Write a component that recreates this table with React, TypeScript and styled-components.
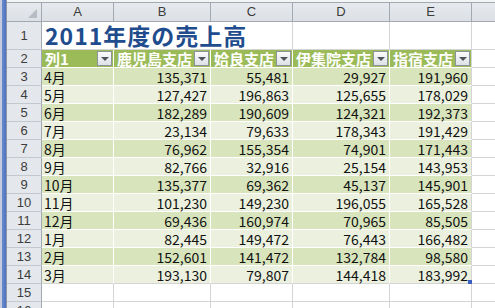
import React from 'react'
import styled, {createGlobalStyle} from 'styled-components'

const GlobalStyle = createGlobalStyle`
    html, body {
        margin: 0;
        padding: 0;
        background: #ffffff;
        overflow: hidden;
    }
    * {
        box-sizing: border-box;
    }
`

const CJK = `'Noto Sans CJK JP', 'Noto Sans', sans-serif`
const GRID = '#d4d4d4'
const HEAD_LINE = '#a3a9b1'

const Window = styled.div`
    display: flex;
    width: 495px;
    height: 308px;
`

const FrameStripe = styled.div`
    width: 7px;
    flex: 0 0 7px;
    background: linear-gradient(to right, #c3cbe0 0, #c3cbe0 2px, #6c8cd0 2px, #4f72bd 6px, #8a96aa 6px);
`

const Sheet = styled.div`
    flex: 1;
    display: flex;
    flex-direction: column;
    overflow: hidden;
`

const TopStrip = styled.div`
    height: 3px;
    flex: 0 0 3px;
    background: #f3f4f6;
    border-bottom: 1px solid ${HEAD_LINE};
`

const Grid = styled.div`
    display: grid;
    grid-template-columns: 35px 72px 97px 82px 97px 82px 72px;
    grid-template-rows: 19px 28px 18px repeat(14, 18px);
`

const ColHead = styled.div`
    display: flex;
    align-items: center;
    justify-content: center;
    background: linear-gradient(#e6e9ed, #dce0e5);
    border-right: 1px solid ${HEAD_LINE};
    border-bottom: 1px solid ${HEAD_LINE};
    font-family: 'Liberation Sans', Arial, sans-serif;
    font-size: 13px;
    line-height: 16px;
    color: #3c3c3c;
`

const Corner = styled(ColHead)`
    align-items: flex-end;
    justify-content: flex-end;
    padding: 0 4px 3px 0;
`

const CornerMark = styled.span`
    width: 0;
    height: 0;
    border-left: 9px solid transparent;
    border-bottom: 9px solid #b7bcc4;
`

const RowHead = styled.div`
    display: flex;
    align-items: center;
    justify-content: center;
    background: #e4e7eb;
    border-right: 1px solid ${HEAD_LINE};
    border-bottom: 1px solid #c3c8cf;
    font-family: 'Liberation Sans', Arial, sans-serif;
    font-size: 13px;
    line-height: 16px;
    color: #3c3c3c;
    padding-top: 1px;
`

const Blank = styled.div`
    border-right: 1px solid ${GRID};
    border-bottom: 1px solid ${GRID};
`

const Title = styled.div`
    grid-column: span 3;
    display: flex;
    align-items: flex-end;
    padding: 0 0 1px 3px;
    border-right: 1px solid ${GRID};
    border-bottom: 1px solid ${GRID};
    font-family: ${CJK};
    font-weight: 700;
    font-size: 23px;
    line-height: 26px;
    letter-spacing: 1px;
    color: #1f4c8c;
    white-space: nowrap;
`

const HeadCell = styled.div<{ $edge?: boolean }>`
    display: flex;
    align-items: center;
    justify-content: space-between;
    gap: 1px;
    padding: 0 1px 0 3px;
    background: #9bbb59;
    border-right: 1px solid ${p => (p.$edge ? GRID : '#ffffff')};
    border-bottom: 1px solid #ffffff;
    font-family: ${CJK};
    font-weight: 700;
    font-size: 15px;
    line-height: 16px;
    color: #ffffff;
    white-space: nowrap;
`

const FilterButton = styled.span`
    flex: 0 0 15px;
    width: 15px;
    height: 15px;
    display: flex;
    align-items: center;
    justify-content: center;
    border: 1px solid #8d939b;
    background: linear-gradient(#fbfbfc, #dde1e6);

    &::after {
        content: '';
        width: 0;
        height: 0;
        margin-top: 1px;
        border-left: 4px solid transparent;
        border-right: 4px solid transparent;
        border-top: 4px solid #50555c;
    }
`

const DataCell = styled.div<{ $band: boolean; $num?: boolean; $last?: boolean; $edge?: boolean }>`
    position: relative;
    display: flex;
    align-items: center;
    justify-content: ${p => (p.$num ? 'flex-end' : 'flex-start')};
    padding: 1px 3px 0 2px;
    background: ${p => (p.$band ? '#d8e4bc' : '#ebf1de')};
    border-right: 1px solid ${p => (p.$edge ? GRID : '#ffffff')};
    border-bottom: 1px solid ${p => (p.$last ? GRID : '#ffffff')};
    font-family: ${CJK};
    font-size: 14px;
    line-height: 16px;
    color: #111111;
    white-space: nowrap;
`

const ResizeHandle = styled.span`
    position: absolute;
    right: -1px;
    bottom: -1px;
    width: 4px;
    height: 4px;
    background: #3d5fbf;
`

const columns = ['A', 'B', 'C', 'D', 'E']
const branches = ['鹿児島支店', '姶良支店', '伊集院支店', '指宿支店']

const sales: [string, string, string, string, string][] = [
    ['4月', '135,371', '55,481', '29,927', '191,960'],
    ['5月', '127,427', '196,863', '125,655', '178,029'],
    ['6月', '182,289', '190,609', '124,321', '192,373'],
    ['7月', '23,134', '79,633', '178,343', '191,429'],
    ['8月', '76,962', '155,354', '74,901', '171,443'],
    ['9月', '82,766', '32,916', '25,154', '143,953'],
    ['10月', '135,377', '69,362', '45,137', '145,901'],
    ['11月', '101,230', '149,230', '196,055', '165,528'],
    ['12月', '69,436', '160,974', '70,965', '85,505'],
    ['1月', '82,445', '149,472', '76,443', '166,482'],
    ['2月', '152,601', '141,472', '132,784', '98,580'],
    ['3月', '193,130', '79,807', '144,418', '183,992'],
]

export default function App() {
    return (
        <>
            <GlobalStyle/>
            <Window>
                <FrameStripe/>
                <Sheet>
                    <TopStrip/>
                    <Grid>
                        <Corner><CornerMark/></Corner>
                        {columns.map(c => <ColHead key={c}>{c}</ColHead>)}
                        {/* column F continues past the window edge, its letter is not in view */}
                        <ColHead/>

                        <RowHead>1</RowHead>
                        <Title>2011年度の売上高</Title>
                        <Blank/>
                        <Blank/>
                        <Blank/>

                        <RowHead>2</RowHead>
                        <HeadCell>
                            <span>列1</span>
                            <FilterButton/>
                        </HeadCell>
                        {branches.map((b, i) => (
                            <HeadCell key={b} $edge={i === branches.length - 1}>
                                <span>{b}</span>
                                <FilterButton/>
                            </HeadCell>
                        ))}
                        <Blank/>

                        {sales.map((row, r) => {
                            const band = r % 2 === 0
                            const last = r === sales.length - 1
                            return (
                                <React.Fragment key={row[0]}>
                                    <RowHead>{r + 3}</RowHead>
                                    {row.map((v, c) => (
                                        <DataCell
                                            key={c}
                                            $band={band}
                                            $num={c > 0}
                                            $last={last}
                                            $edge={c === row.length - 1}
                                        >
                                            {v}
                                            {last && c === row.length - 1 && <ResizeHandle/>}
                                        </DataCell>
                                    ))}
                                    <Blank/>
                                </React.Fragment>
                            )
                        })}

                        {[15, 16].map(n => (
                            <React.Fragment key={n}>
                                <RowHead>{n}</RowHead>
                                {columns.map(c => <Blank key={c}/>)}
                                <Blank/>
                            </React.Fragment>
                        ))}
                    </Grid>
                </Sheet>
            </Window>
        </>
    )
}
